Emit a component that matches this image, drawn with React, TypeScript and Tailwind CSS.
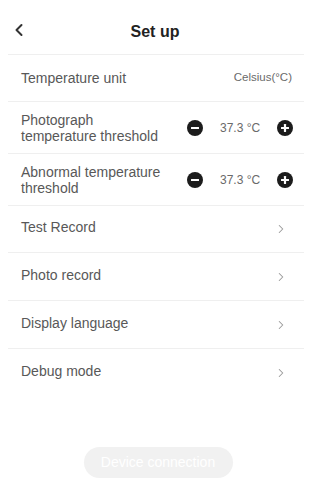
import { ChevronLeft, ChevronRight } from "lucide-react"

function RoundIcon({ plus }: { plus?: boolean }) {
    return (
        <svg width="16" height="16" viewBox="0 0 16 16">
            <circle cx="8" cy="8" r="8" fill="#1c1c1c" />
            <rect x="4" y="6.9" width="8" height="2.2" rx="0.4" fill="#fff" />
            {plus && <rect x="6.9" y="4" width="2.2" height="8" rx="0.4" fill="#fff" />}
        </svg>
    )
}

function Stepper({ value }: { value: string }) {
    return (
        <div className="flex items-center ml-auto mr-[11px]">
            <RoundIcon />
            <span className="w-[74px] pl-[17px] text-[12px] text-[#6a6a6a]">{value}</span>
            <RoundIcon plus />
        </div>
    )
}

const links = ["Test Record", "Photo record", "Display language", "Debug mode"]

export default function App() {
    return (
        <main className="w-[316px] h-[483px] bg-white flex flex-col" style={{ fontFamily: "'Liberation Sans', Arial, sans-serif" }}>

            <header className="relative h-[55px] flex items-center justify-center pt-[9px] border-b border-[#efefef] ml-2 mr-3">
                <ChevronLeft className="absolute left-[1px] top-[20px] text-[#333]" size={20} strokeWidth={2.4} />
                <h1 className="text-[16px] font-bold text-[#222] -ml-[2px]">Set up</h1>
            </header>

            <div className="ml-2 mr-3 flex flex-col text-[14px] text-[#585858]">
                <div className="h-[47px] flex items-center pl-[13px] border-b border-[#efefef]">
                    <span>Temperature unit</span>
                    <span className="ml-auto mr-[12px] text-[11.5px] text-[#6a6a6a]">Celsius(°C)</span>
                </div>

                <div className="h-[52px] flex items-center pl-[13px] border-b border-[#efefef]">
                    <span className="leading-[16px]">Photograph<br />temperature threshold</span>
                    <Stepper value="37.3 °C" />
                </div>

                <div className="h-[52px] flex items-center pl-[13px] border-b border-[#efefef]">
                    <span className="leading-[16px]">Abnormal temperature<br />threshold</span>
                    <Stepper value="37.3 °C" />
                </div>

                {links.map((l, i) => (
                    <div key={l} className={`${i === 0 ? "h-[47px]" : "h-[48px]"} flex items-center pl-[13px] pb-[3px] ${i < links.length - 1 ? "border-b border-[#efefef]" : ""}`}>
                        <span>{l}</span>
                        <ChevronRight className="ml-auto mr-[16px] mt-[3px] text-[#999]" size={14} strokeWidth={1.8} />
                    </div>
                ))}
            </div>

            <div className="flex justify-center mt-[50px]">
                <button className="w-[149px] h-[31px] rounded-full bg-[#f1f1f1] text-white text-[14px]">
                    Device connection
                </button>
            </div>

        </main>
    )
}
